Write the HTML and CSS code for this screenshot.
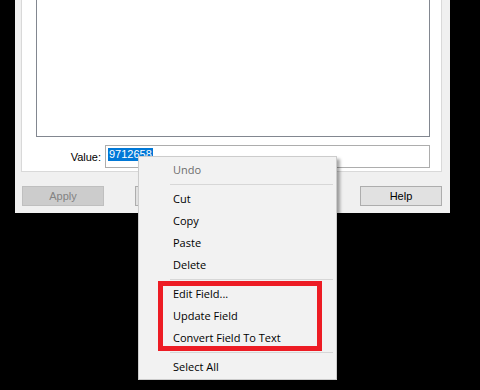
FILE: index.html
```html
<!DOCTYPE html>
<html lang="en">
<head>
  <meta charset="UTF-8">
  <title>Field Value</title>
  <link rel="stylesheet" href="styles.css">
</head>
<body>
  <div class="dialog">
    <div class="panel">
      <div class="listbox"></div>
      <div class="value-row">
        <label class="value-label">Value:</label>
        <div class="textbox"><span class="sel">9712658</span></div>
      </div>
    </div>
    <div class="buttons">
      <button class="btn disabled">Apply</button>
      <!-- these two sit under the context menu -->
      <button class="btn"></button>
      <button class="btn"></button>
      <button class="btn">Help</button>
    </div>
  </div>

  <div class="menu">
    <div class="item grey">Undo</div>
    <div class="sep"></div>
    <div class="item">Cut</div>
    <div class="item">Copy</div>
    <div class="item">Paste</div>
    <div class="item">Delete</div>
    <div class="sep"></div>
    <div class="item">Edit Field...</div>
    <div class="item">Update Field</div>
    <div class="item">Convert Field To Text</div>
    <div class="sep"></div>
    <div class="item">Select All</div>
    <div class="highlight"></div>
  </div>
</body>
</html>
```

FILE: styles.css
```css
html, body {
  margin: 0;
  height: 100%;
}
body {
  background: #000;
  overflow: hidden;
  position: relative;
  font-family: "Liberation Sans", Arial, sans-serif;
  font-size: 11px;
}
.dialog {
  margin-left: 15px;
  width: 435px;
  height: 213px;
  background: #f0f0f0;
  padding: 0 8px 0 6px;
  box-sizing: border-box;
  display: flex;
  flex-direction: column;
}
.panel {
  height: 173px;
  margin-top: -1px;
  background: #fff;
  border: 1px solid #d9d9d9;
  box-sizing: border-box;
  padding: 0 11px 3px 14px;
  display: flex;
  flex-direction: column;
}
.listbox {
  flex: 1;
  border: 1px solid #828790;
  border-top: none;
}
.value-row {
  display: flex;
  align-items: center;
  margin-top: 8px;
}
.value-label {
  width: 65px;
  text-align: right;
  padding-right: 4px;
  color: #000;
}
.textbox {
  flex: 1;
  height: 23px;
  border: 1px solid #adadad;
  box-sizing: border-box;
  padding: 2px 2px;
}
.sel {
  display: inline-block;
  background: #0078d7;
  color: #fff;
  line-height: 13px;
  padding: 0 1px;
}
.buttons {
  display: flex;
  justify-content: space-between;
  margin-top: 14px;
  padding-left: 1px;
}
.btn {
  width: 82px;
  height: 20px;
  margin: 0;
  padding: 0;
  background: #e1e1e1;
  border: 1px solid #adadad;
  font-family: "Liberation Sans", Arial, sans-serif;
  font-size: 11px;
  color: #000;
}
.btn.disabled {
  background: #cccccc;
  border-color: #bfbfbf;
  color: #838383;
}
.menu {
  position: absolute;
  left: 138px;
  top: 156px;
  width: 199px;
  height: 224px;
  box-sizing: border-box;
  background: #f2f2f2;
  border: 1px solid #cccccc;
  padding: 2px 2px;
  box-shadow: 3px 3px 3px rgba(0, 0, 0, 0.35);
  font-family: "Open Sans", "Noto Sans", sans-serif;
  font-size: 11px;
}
.item {
  height: 22px;
  line-height: 22px;
  padding-left: 32px;
  color: #000;
}
.item.grey {
  color: #6d6d6d;
}
.sep {
  height: 1px;
  background: #d7d7d7;
  margin: 3px 1px 3px 29px;
}
.highlight {
  position: absolute;
  left: 19px;
  top: 124px;
  width: 164px;
  height: 70px;
  box-sizing: border-box;
  border: 5px solid #ed1c24;
}
```
